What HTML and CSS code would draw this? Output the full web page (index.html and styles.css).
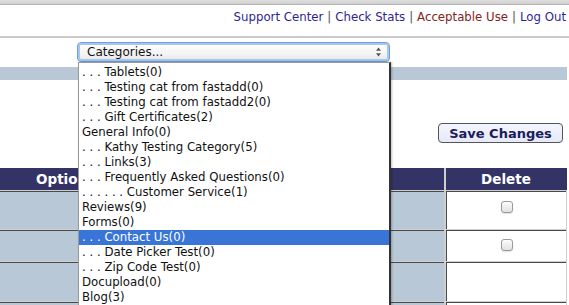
FILE: index.html
```html
<!DOCTYPE html>
<html>
<head>
<meta charset="utf-8">
<link rel="stylesheet" href="styles.css">
</head>
<body>
<div class="page">
  <div class="topbar"></div>
  <div class="header">
    <nav class="links">
      <a class="visited" href="#">Support Center</a><span class="sep">|</span><a class="visited" href="#">Check Stats</a><span class="sep">|</span><a class="red" href="#">Acceptable Use</a><span class="sep">|</span><a class="visited" href="#">Log Out</a>
    </nav>
  </div>
  <div class="toolbar">
    <div class="select">
      <span>Categories...</span>
      <svg class="arrows" width="7" height="10" viewBox="0 0 7 10"><path d="M3.5 0.5 L6 3.8 H1 Z M3.5 9.5 L6 6.2 H1 Z" fill="#555"/></svg>
    </div>
  </div>
  <div class="main">
    <div class="band"></div>
    <div class="actions">
      <button class="save">Save Changes</button>
    </div>
    <table class="grid">
      <thead>
        <tr><th class="opt">Options</th><th class="del">Delete</th></tr>
      </thead>
      <tbody>
        <tr class="r1"><td class="opt"></td><td class="del"><span class="cb"></span></td></tr>
        <tr class="r2"><td class="opt"></td><td class="del"><span class="cb"></span></td></tr>
        <tr class="r3"><td class="opt"></td><td class="del"></td></tr>
        <tr class="r4"><td class="opt"></td><td class="del"></td></tr>
      </tbody>
    </table>
  </div>
  <ul class="dropdown">
    <li>. . . Tablets(0)</li>
    <li>. . . Testing cat from fastadd(0)</li>
    <li>. . . Testing cat from fastadd2(0)</li>
    <li>. . . Gift Certificates(2)</li>
    <li>General Info(0)</li>
    <li>. . . Kathy Testing Category(5)</li>
    <li>. . . Links(3)</li>
    <li>. . . Frequently Asked Questions(0)</li>
    <li>. . . . . . Customer Service(1)</li>
    <li>Reviews(9)</li>
    <li>Forms(0)</li>
    <li class="sel">. . . Contact Us(0)</li>
    <li>. . . Date Picker Test(0)</li>
    <li>. . . Zip Code Test(0)</li>
    <li>Docupload(0)</li>
    <li>Blog(3)</li>
  </ul>
</div>
</body>
</html>
```
FILE: styles.css
```css
* { box-sizing: border-box; }
html, body { margin: 0; padding: 0; background: #fff; }
body { font-family: "DejaVu Sans", Verdana, sans-serif; overflow: hidden; }
.page { position: relative; width: 569px; height: 305px; overflow: hidden; }

.topbar {
  height: 5px;
  background: linear-gradient(#dedede, #d0d0d0);
  border-bottom: 1px solid #b4b4b4;
}
.header {
  height: 33px;
  display: flex;
  justify-content: flex-end;
  align-items: flex-start;
  padding: 5px 3px 0 0;
  border-bottom: 2px solid #cacaca;
}
.links { font-size: 11.75px; color: #333; white-space: nowrap; }
.links a { text-decoration: none; }
.links .visited { color: #2e1f94; }
.links .red { color: #86221c; }
.links .sep { color: #555; margin: 0 4px; }

.toolbar { height: 29px; padding: 4px 0 0 77px; }
.select {
  width: 313px;
  height: 20px;
  border: 1px solid #6f9fdc;
  border-radius: 4px;
  box-shadow: inset 0 0 0 2px #a6c6ef;
  background: linear-gradient(#ffffff, #f4f4f4 60%, #e6e6e6);
  display: flex;
  align-items: center;
  justify-content: space-between;
  padding: 0 7px 0 9px;
  font-size: 12px;
  color: #111;
}
.arrows { display: block; }

.main { width: 567px; }
.band { height: 13px; background: #b8c8d6; }
.actions {
  height: 88px;
  display: flex;
  justify-content: flex-end;
  align-items: flex-start;
  padding: 43px 4px 0 0;
}
.save {
  width: 125px;
  height: 20px;
  padding: 0;
  border: 1px solid #555;
  border-radius: 4px;
  background: linear-gradient(#f3f5fd, #e6eaf8);
  color: #1c1c5c;
  font-family: "DejaVu Sans", Verdana, sans-serif;
  font-weight: bold;
  font-size: 13px;
}

.grid { width: 567px; border-collapse: collapse; }
.grid th {
  background: #333366;
  color: #fff;
  font-size: 13.5px;
  font-weight: bold;
  height: 22px;
  padding: 0;
  border-bottom: 1px solid #cfcfcf;
}
.grid th.opt { text-align: left; padding-left: 36px; }
.grid th.del { width: 122px; text-align: center; border-left: 2px solid #cfcfcf; }
.grid td {
  padding: 0;
  border-top: 1px solid #cfcfcf;
  box-shadow: inset 0 1px 0 #4a4a4a;
  vertical-align: top;
  text-align: center;
}
.grid td.opt { background: #b8c8d6; }
.grid td.del { background: #fff; border-left: 2px solid #cfcfcf; box-shadow: inset 1px 1px 0 #4a4a4a; border-right: 1px solid #cfcfcf; padding-left: 3px; }
.r1 td { height: 39px; }
.r2 td { height: 32px; }
.r3 td { height: 40px; }
.r4 td { height: 20px; }
.cb {
  display: inline-block;
  width: 12px;
  height: 12px;
  margin-top: 10px;
  border: 1px solid #9a9a9a;
  border-radius: 3px;
  background: linear-gradient(#fdfdfd, #e0e0e0);
  box-shadow: 0 1px 1px rgba(0,0,0,0.12);
}
.r2 .cb { margin-top: 9px; }

.dropdown {
  position: absolute;
  left: 78px;
  top: 62px;
  width: 313px;
  height: 260px;
  margin: 0;
  padding: 2px 0 0 0;
  list-style: none;
  background: #fff;
  border: 1px solid #9a9a9a;
  border-right: 2px solid #333;
  box-shadow: 1px 0 2px rgba(0,0,0,0.25);
  font-size: 11.75px;
  color: #111;
}
.dropdown li {
  height: 15px;
  line-height: 15px;
  padding-left: 3px;
  white-space: nowrap;
}
.dropdown li.sel { background: #3875d7; color: #fff; }
```
